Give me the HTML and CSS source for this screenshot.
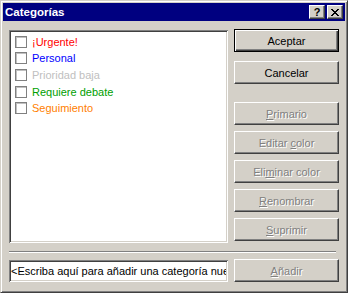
FILE: index.html
```html
<!DOCTYPE html>
<html lang="es">
<head>
  <meta charset="UTF-8" />
  <title>Categorías</title>
  <link rel="stylesheet" href="styles.css">
</head>
<body>
  <div class="dialog">
    <div class="titlebar">
      <span class="title">Categorías</span>
      <div class="caption-btns">
        <button class="cap-btn help">?</button>
        <button class="cap-btn close">
          <svg width="8" height="7" viewBox="0 0 8 7" shape-rendering="crispEdges">
            <path d="M0 0h2v1h1v1h2v-1h1v-1h2v1h-1v1h-1v1h-1v1h1v1h1v1h1v1h-2v-1h-1v-1h-2v1h-1v1h-2v-1h1v-1h1v-1h1v-1h-1v-1h-1v-1h-1z" fill="#000"/>
          </svg>
        </button>
      </div>
    </div>

    <div class="content">
      <div class="top">
        <ul class="list">
          <li class="item"><span class="check"></span><span class="c-red">¡Urgente!</span></li>
          <li class="item"><span class="check"></span><span class="c-blue">Personal</span></li>
          <li class="item"><span class="check"></span><span class="c-silver">Prioridad baja</span></li>
          <li class="item"><span class="check"></span><span class="c-green">Requiere debate</span></li>
          <li class="item"><span class="check"></span><span class="c-orange">Seguimiento</span></li>
        </ul>

        <div class="buttons">
          <button class="btn default">Aceptar</button>
          <button class="btn cancel">Cancelar</button>
          <button class="btn disabled first-tool"><u>P</u>rimario</button>
          <button class="btn disabled tool">Editar <u>c</u>olor</button>
          <button class="btn disabled tool">Eli<u>m</u>inar color</button>
          <button class="btn disabled tool"><u>R</u>enombrar</button>
          <button class="btn disabled tool"><u>S</u>uprimir</button>
        </div>
      </div>

      <div class="separator"></div>

      <div class="bottom">
        <input class="new-cat" type="text" value="&lt;Escriba aquí para añadir una categoría nueva&gt;">
        <button class="btn disabled"><u>A</u>ñadir</button>
      </div>
    </div>
  </div>
</body>
</html>
```

FILE: styles.css
```css
:root {
  --face: #d4d0c8;
  --shadow: #808080;
  --dark: #404040;
  --caption: #000080;
}

* {
  box-sizing: border-box;
}

body {
  margin: 0;
  font-family: 'Liberation Sans', Arial, sans-serif;
  font-size: 11px;
}

.dialog {
  width: 348px;
  height: 293px;
  padding: 2px;
  background-color: var(--face);
  border: 1px solid;
  border-color: var(--face) var(--dark) var(--dark) var(--face);
  box-shadow: inset 1px 1px #fff, inset -1px -1px var(--shadow);
}

.titlebar {
  height: 18px;
  padding: 0 2px;
  background-color: var(--caption);
  color: #fff;
  display: flex;
  align-items: center;
  justify-content: space-between;
}

.title {
  font-weight: bold;
  font-size: 11.5px;
}

.caption-btns {
  display: flex;
  gap: 2px;
}

.cap-btn {
  width: 16px;
  height: 14px;
  padding: 0;
  margin: 0;
  background-color: var(--face);
  border: 1px solid;
  border-color: #fff var(--dark) var(--dark) #fff;
  box-shadow: inset -1px -1px var(--shadow);
  display: flex;
  align-items: center;
  justify-content: center;
  font-family: inherit;
  font-weight: bold;
  font-size: 11px;
  line-height: 1;
  color: #000;
}

.cap-btn.close svg {
  display: block;
}

.content {
  padding: 8px 6px 0 6px;
}

.top {
  display: flex;
  align-items: flex-start;
  gap: 6px;
}

/* sunken list box */
.list {
  width: 219px;
  height: 213px;
  margin: 1px 0 0 0;
  padding: 3.5px 0 0 6px;
  list-style: none;
  background-color: #fff;
  box-shadow: inset 1px 1px var(--shadow), inset -1px -1px #fff,
              inset 2px 2px var(--dark), inset -2px -2px var(--face);
}

.item {
  height: 16.67px;
  display: flex;
  align-items: center;
  gap: 5px;
  white-space: nowrap;
}

.check {
  width: 12px;
  height: 12px;
  flex: none;
  background-color: #fff;
  border: 1px solid var(--shadow);
  box-shadow: inset 1px 1px #c0c0c0;
}

.c-red { color: #ff0000; }
.c-blue { color: #0000ff; }
.c-silver { color: #c0c0c0; }
.c-green { color: #00a000; }
.c-orange { color: #ff8000; }

.buttons {
  width: 105px;
  display: flex;
  flex-direction: column;
}

.btn {
  width: 105px;
  height: 23px;
  padding: 0;
  margin: 0;
  background-color: var(--face);
  border: 1px solid;
  border-color: #fff var(--dark) var(--dark) #fff;
  box-shadow: inset -1px -1px var(--shadow);
  font-family: inherit;
  font-size: 11px;
  color: #000;
}

.btn.default {
  border-color: #000;
  box-shadow: inset 1px 1px #fff, inset -1px -1px var(--dark), inset -2px -2px var(--shadow);
}

.btn.cancel {
  margin-top: 9px;
}

.btn.first-tool {
  margin-top: 18px;
}

.btn.tool {
  margin-top: 6px;
}

.btn.disabled {
  color: var(--shadow);
  text-shadow: 1px 1px #fff;
}

.separator {
  height: 2px;
  margin: 8px 3px 0 0;
  border-top: 1px solid var(--shadow);
  border-bottom: 1px solid #fff;
}

.bottom {
  display: flex;
  align-items: flex-start;
  gap: 6px;
  margin-top: 6px;
}

.new-cat {
  width: 219px;
  height: 22px;
  margin: 1px 0 0 0;
  padding: 0 2px;
  border: none;
  outline: none;
  background-color: #fff;
  font-family: inherit;
  font-size: 11px;
  color: #000;
  box-shadow: inset 1px 1px var(--shadow), inset -1px -1px #fff,
              inset 2px 2px var(--dark), inset -2px -2px var(--face);
}
```
